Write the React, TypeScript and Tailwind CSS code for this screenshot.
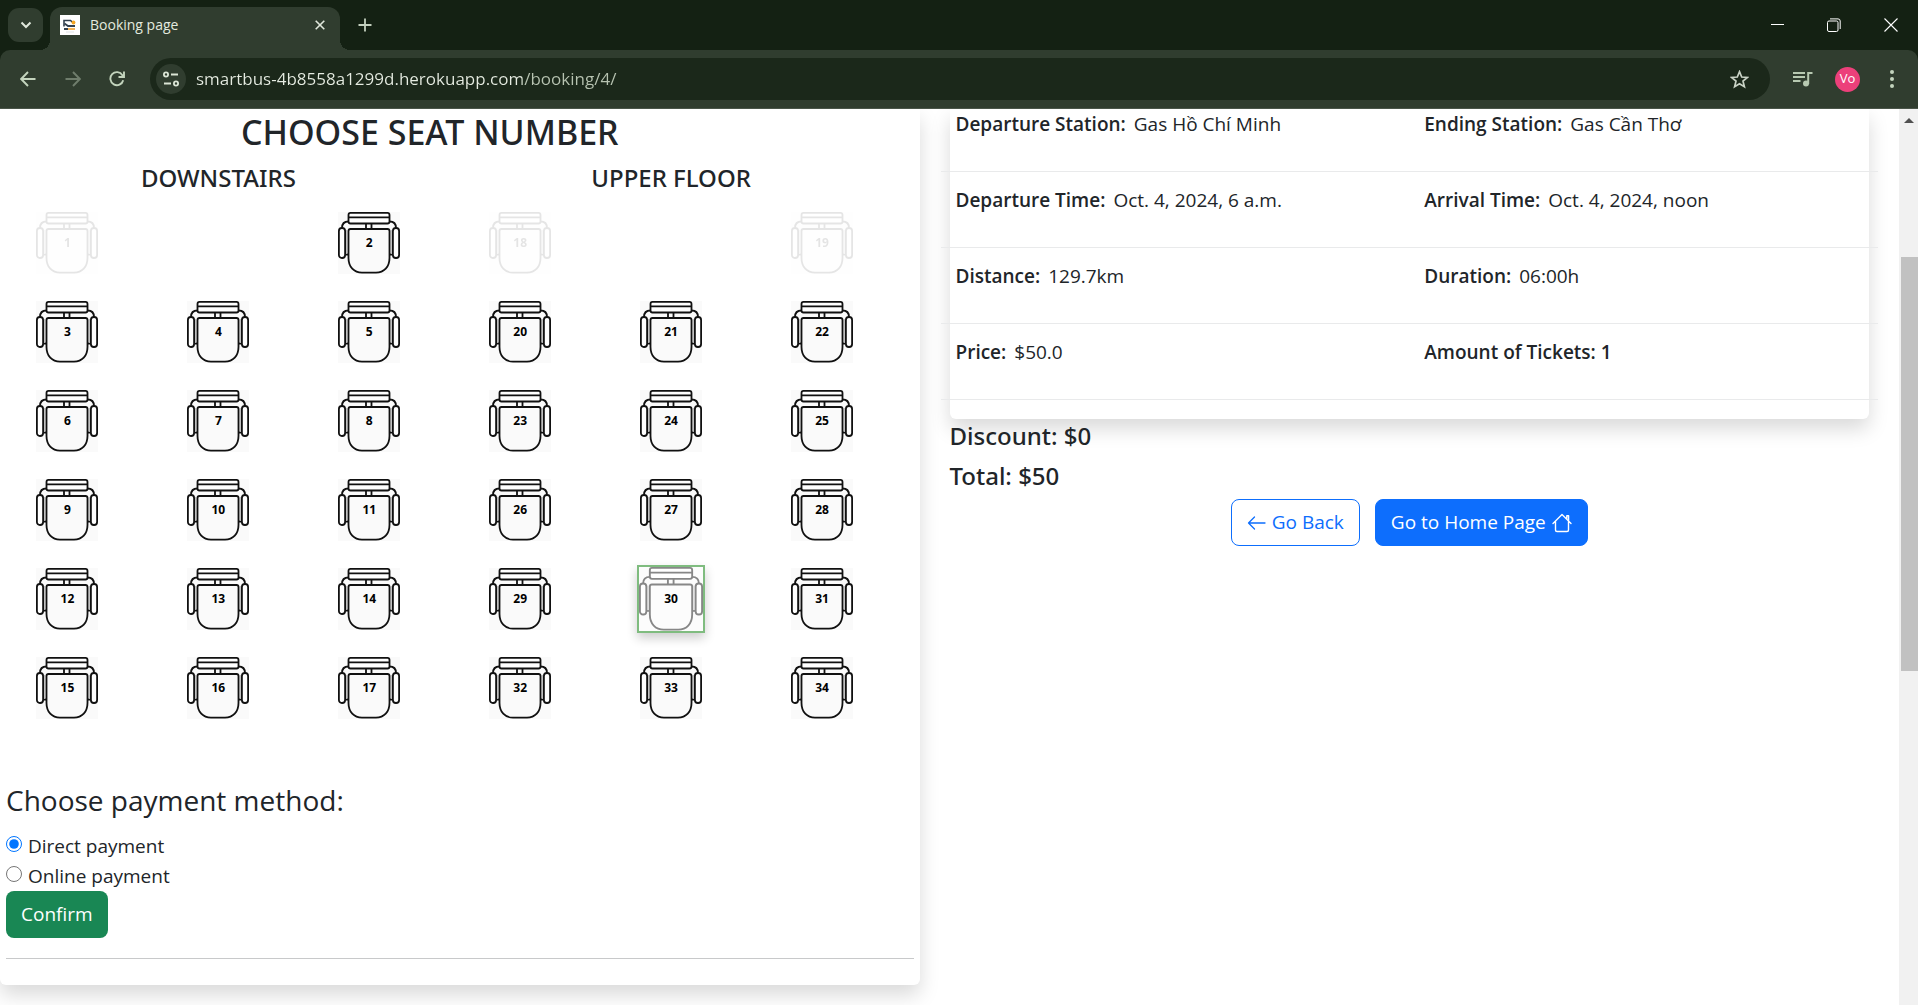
import { useState } from 'react';
import type { ReactNode } from 'react';

type Slot = number | null;

const downstairs: Slot[][] = [
  [1, null, 2],
  [3, 4, 5],
  [6, 7, 8],
  [9, 10, 11],
  [12, 13, 14],
  [15, 16, 17],
];
const upperFloor: Slot[][] = [
  [18, null, 19],
  [20, 21, 22],
  [23, 24, 25],
  [26, 27, 28],
  [29, 30, 31],
  [32, 33, 34],
];
const sold = [1, 18, 19];

const details: [string, string][][] = [
  [['Departure Station:', 'Gas Hồ Chí Minh'], ['Ending Station:', 'Gas Cần Thơ']],
  [['Departure Time:', 'Oct. 4, 2024, 6 a.m.'], ['Arrival Time:', 'Oct. 4, 2024, noon']],
  [['Distance:', '129.7km'], ['Duration:', '06:00h']],
  [['Price:', '$50.0'], ['Amount of Tickets: 1', '']],
];

function SeatDrawing({ selected }: { selected: boolean }) {
  return (
    <svg viewBox="0 0 62 62" className={selected ? 'block size-16 opacity-50' : 'block size-[62px]'} fill="none" stroke="#111" strokeWidth="1.8" aria-hidden="true">
      <rect width="62" height="62" fill="#fafafa" stroke="none" />
      <path d="M4 16C4 11.500 6 9.500 10.500 9.500M58 16C58 11.500 56 9.500 51.500 9.500M7 42.500H10.500M51.500 42.500H55" />
      <path d="M8.700 18V42M53.300 18V42" stroke="#bbb" strokeWidth="1.200" />
      <rect x="10.500" y="0.900" width="41" height="10.600" rx="2" fill="#fff" />
      <path d="M10.500 5.400H51.500M28 11.500V17M33.500 11.500V17" />
      <path d="M12.500 17H49.500Q51.500 17 51.500 19V46C51.500 55 46 60.700 38 60.700H24C16 60.700 10.500 55 10.500 46V19Q10.500 17 12.500 17Z" fill="#fafafa" />
      <rect x="0.900" y="16" width="6.200" height="30" rx="3" fill="#fff" />
      <rect x="54.900" y="16" width="6.200" height="30" rx="3" fill="#fff" />
    </svg>
  );
}

function Seat({ n, selected, onPick }: { n: number; selected: boolean; onPick: (n: number) => void }) {
  const taken = sold.includes(n);
  return (
    <button
      type="button"
      disabled={taken}
      aria-pressed={selected}
      onClick={() => onPick(n)}
      className={
        selected
          ? 'relative -m-1 border-2 border-[#7fbc7f] shadow-[0_5px_10px_rgba(0,0,0,0.2)]'
          : taken
            ? 'relative opacity-10'
            : 'relative'
      }
    >
      <SeatDrawing selected={selected} />
      <span className="absolute inset-0 flex items-center justify-center text-[12px] leading-none font-bold text-black">{n}</span>
    </button>
  );
}

function IconButton({ label, children, className }: { label: string; children: ReactNode; className: string }) {
  return (
    <button type="button" aria-label={label} className={`flex items-center justify-center ${className}`}>
      {children}
    </button>
  );
}

function BrowserBar() {
  return (
    <header className="shrink-0 bg-[#142113] text-[#e3eadf]">
      <div className="flex h-[50px]">
        <IconButton label="Search tabs" className="mt-2 ml-2 h-[34px] w-[35px] rounded-[11px] bg-[#303d2f]">
          <svg width="12" height="8" viewBox="0 0 12 8" fill="none" stroke="#e0e8dc" strokeWidth="2"><path d="M1.500 1.500L6 6L10.500 1.500" /></svg>
        </IconButton>
        <div className="relative mt-[7px] ml-[7px] flex w-[290px] items-center rounded-t-xl bg-[#303d2f] pr-[15px] pb-2 pl-2.5">
          <span className="absolute bottom-0 -left-2.5 size-2.5 bg-[radial-gradient(circle_at_0_0,#142113_10px,#303d2f_10px)]" />
          <span className="absolute -right-2.5 bottom-0 size-2.5 bg-[radial-gradient(circle_at_100%_0,#142113_10px,#303d2f_10px)]" />
          <svg width="20" height="20" viewBox="0 0 20 20" aria-hidden="true">
            <rect width="20" height="20" fill="#fff" />
            <path d="M4 11.500V5.500H10.500L14 8.500" fill="none" stroke="#33414f" strokeWidth="1.600" />
            <path d="M4.500 8.500L8 11H15" fill="none" stroke="#33414f" strokeWidth="1.800" />
            <circle cx="13.500" cy="7.500" r="1.900" fill="#f5a623" />
            <path d="M4 14H8" stroke="#33414f" strokeWidth="2" />
            <path d="M8 14H15" stroke="#f5b45a" strokeWidth="2" />
            <path d="M6 17H14" stroke="#dfe3e7" />
          </svg>
          <span className="ml-2.5 flex-1 text-[14px] leading-5">Booking page</span>
          <IconButton label="Close tab" className="size-[10px]">
            <svg width="10" height="10" viewBox="0 0 10 10" stroke="#e0e8dc" strokeWidth="1.600"><path d="M0.700 0.700L9.300 9.300M9.300 0.700L0.700 9.300" /></svg>
          </IconButton>
        </div>
        <IconButton label="New tab" className="ml-[18px] w-[14px]">
          <svg width="14" height="14" viewBox="0 0 14 14" stroke="#c3d0be" strokeWidth="1.800"><path d="M7 0.500V13.500M0.500 7H13.500" /></svg>
        </IconButton>
        <div className="ml-auto flex h-[49px]">
          <IconButton label="Minimize" className="w-[51px]">
            <svg width="13" height="13" viewBox="0 0 13 13" stroke="#fff" strokeWidth="1"><path d="M0 6.500H13" /></svg>
          </IconButton>
          <IconButton label="Restore" className="w-[61px]">
            <svg width="14" height="14" viewBox="0 0 14 14" fill="none" stroke="#fff"><rect x="0.500" y="3" width="10.500" height="10.500" rx="1.500" /><path d="M3 0.900H11Q13.200 0.900 13.200 3V11" /></svg>
          </IconButton>
          <IconButton label="Close" className="w-[54px]">
            <svg width="14" height="14" viewBox="0 0 14 14" stroke="#fff" strokeWidth="1.100"><path d="M0.500 0.500L13.500 13.500M13.500 0.500L0.500 13.500" /></svg>
          </IconButton>
        </div>
      </div>

      <div className="flex h-[59px] items-center rounded-t-[10px] border-b border-[#4a5549] bg-[#303d2f]">
        <IconButton label="Back" className="ml-5 size-4">
          <svg width="16" height="16" viewBox="0 0 16 16" fill="none" stroke="#c3d4bd" strokeWidth="1.900"><path d="M15.500 8H1.500M8 1L1.200 8L8 15" /></svg>
        </IconButton>
        <IconButton label="Forward" className="ml-[29px] size-4">
          <svg width="16" height="16" viewBox="0 0 16 16" fill="none" stroke="#6f7d6c" strokeWidth="1.900"><path d="M0.500 8H14.500M8 1L14.800 8L8 15" /></svg>
        </IconButton>
        <IconButton label="Reload" className="ml-7 size-4">
          <svg width="16" height="16" viewBox="0 0 16 16" fill="none" stroke="#c3d4bd" strokeWidth="1.900"><path d="M14.200 9.200A6.500 6.500 0 1 1 13.400 4.200L14.800 6M15 0.500V6H9.500" /></svg>
        </IconButton>
        <form className="ml-[25px] flex h-[42px] flex-1 items-center rounded-full bg-[#1b281a] pr-[21px] pl-1.5">
          <IconButton label="Site information" className="size-[30px] rounded-full bg-[#303d2f]">
            <svg width="16" height="16" viewBox="0 0 16 16" fill="none" stroke="#dbe5d6" strokeWidth="1.800"><circle cx="3" cy="3.500" r="2.100" /><path d="M8 3.500H15M1 12.500H8" /><circle cx="13" cy="12.500" r="2.100" /></svg>
          </IconButton>
          <input
            aria-label="Address"
            className="ml-2.5 h-6 min-w-0 flex-1 bg-[linear-gradient(90deg,#e6ece2_326px,#b7c3b1_326px)] bg-clip-text text-[17px] text-transparent outline-none"
            defaultValue="smartbus-4b8558a1299d.herokuapp.com/booking/4/"
          />
          <IconButton label="Bookmark this tab" className="size-[19px]">
            <svg width="19" height="19" viewBox="0 0 19 19" fill="none" stroke="#c9d2c5" strokeWidth="1.700"><path d="M9.500 1.700L11.700 7L17.400 7.400L13 11.100L14.400 16.700L9.500 13.700L4.600 16.700L6 11.100L1.600 7.400L7.300 7Z" /></svg>
          </IconButton>
        </form>
        <IconButton label="Media controls" className="ml-[23px] w-5">
          <svg width="20" height="16" viewBox="0 0 20 16" fill="none" stroke="#b7c9b1" strokeWidth="2"><path d="M0 2H12M0 6H12M0 10H7.500M15.200 13V2H19.500" /><circle cx="13" cy="12.500" r="3" fill="#b7c9b1" stroke="none" /></svg>
        </IconButton>
        <IconButton label="Profile" className="ml-[22px] size-[25px] rounded-full bg-[#ec407a] text-[13px] text-white">Vo</IconButton>
        <IconButton label="Menu" className="mr-6 ml-[30px] w-1">
          <svg width="4" height="18" viewBox="0 0 4 18" fill="#c3d4bd"><circle cx="2" cy="2" r="2" /><circle cx="2" cy="9" r="2" /><circle cx="2" cy="16" r="2" /></svg>
        </IconButton>
      </div>
    </header>
  );
}

export default function App() {
  const [picked, setPicked] = useState(30);
  const [method, setMethod] = useState('direct');
  const rows = downstairs.map((row, i) => [...row, ...upperFloor[i]]);

  return (
    <div className="flex h-screen flex-col overflow-hidden bg-white font-['Open_Sans',sans-serif] text-[#212529]">
      <BrowserBar />
      <div className="flex min-h-0 flex-1">
        <main className="grid min-w-0 flex-1 grid-cols-2 items-start gap-[30px] overflow-hidden pr-[30px]">
          <form className="rounded-b-md bg-white pt-0.5 pb-[26px] shadow-[0_10px_20px_rgba(0,0,0,0.15)]" onSubmit={(e) => e.preventDefault()}>
            <h2 className="mr-[60px] text-center font-['Noto_Sans',sans-serif] text-[34px] leading-[42px] font-medium">CHOOSE SEAT NUMBER</h2>
            <div className="mt-2.5 mr-[22px] -ml-2">
              <div className="grid grid-cols-2 text-center font-['Noto_Sans',sans-serif] text-[24px] leading-[30px] font-medium">
                <h3>DOWNSTAIRS</h3>
                <h3>UPPER FLOOR</h3>
              </div>
              <div className="mt-[19px] grid grid-cols-6 gap-y-[27px]">
                {rows.flat().map((n, i) => (
                  <div key={i} className="flex h-[62px] items-center justify-center">
                    {n !== null && <Seat n={n} selected={n === picked} onPick={setPicked} />}
                  </div>
                ))}
              </div>
            </div>

            <div className="px-1.5">
              <fieldset className="mt-[62px] text-[19px] leading-[30px]">
                <legend className="mb-3 text-[28px] leading-[38px]">Choose payment method:</legend>
                {[['direct', 'Direct payment'], ['online', 'Online payment']].map(([id, text]) => (
                  <label key={id} className="flex items-center gap-1.5">
                    <input type="radio" name="method" className="mb-1 size-4 accent-[#0075ff]" checked={method === id} onChange={() => setMethod(id)} />
                    {text}
                  </label>
                ))}
              </fieldset>
              <button type="submit" className="block rounded-lg bg-[#198754] px-[15px] py-[9px] text-[19px] leading-[29px] text-white">Confirm</button>
              <hr className="mt-5 border-[#c8c9ca]" />
            </div>
          </form>

          <section>
            <div className="rounded-b-md bg-white pb-[19px] shadow-[0_10px_20px_rgba(0,0,0,0.15)]">
              {details.map((pair, i) => (
                <dl key={i} className="-mx-[9px] grid grid-cols-2 border-b border-[#e9eaeb] pt-[13px] pb-8 text-[19px] leading-[30px] first:pt-0">
                  {pair.map(([name, value]) => (
                    <div key={name} className="flex gap-2 pl-[15px]">
                      <dt className="font-semibold">{name}</dt>
                      <dd>{value}</dd>
                    </div>
                  ))}
                </dl>
              ))}
            </div>
            <div className="relative">
              <div className="mt-0.5 flex flex-col gap-2.5 font-['Noto_Sans',sans-serif] text-[24px] leading-[30px] font-medium">
                <p>Discount: $0</p>
                <p>Total: $50</p>
              </div>
              <nav className="mt-2 flex justify-center gap-[15px] text-[19px] leading-[29px]">
                <a href="#back" className="flex items-center gap-1.5 rounded-lg border border-[#0d6efd] px-[15px] py-2 text-[#0d6efd]">
                  <svg width="19" height="16" viewBox="0 0 19 16" fill="none" stroke="currentColor" strokeWidth="1.300" strokeLinecap="round" strokeLinejoin="round"><path d="M18 8H1.500M7.500 2L1.500 8L7.500 14" /></svg>
                  Go Back
                </a>
                <a href="#home" className="flex items-center gap-1.5 rounded-lg border border-[#0d6efd] bg-[#0d6efd] px-[15px] py-2 text-white">
                  Go to Home Page
                  <svg width="20" height="20" viewBox="0 0 20 20" fill="none" stroke="currentColor" strokeWidth="1.400" strokeLinecap="round" strokeLinejoin="round"><path d="M1 10.500L10 1.500L19 10.500M3.500 8.500V17Q3.500 18.500 5 18.500H15Q16.500 18.500 16.500 17V8.500M14.800 6V2.800H16.600V7.800" /></svg>
                </a>
              </nav>
            </div>
          </section>
        </main>

        <div className="flex w-[19px] shrink-0 flex-col items-end bg-[#f1f1f1]">
          <svg className="mt-[9px] mr-1" width="10" height="5" viewBox="0 0 10 5" fill="#505050"><path d="M5 0L10 5H0Z" /></svg>
          <div className="mt-[134px] h-[414px] w-[17px] bg-[#c1c1c1]" />
        </div>
      </div>
    </div>
  );
}
